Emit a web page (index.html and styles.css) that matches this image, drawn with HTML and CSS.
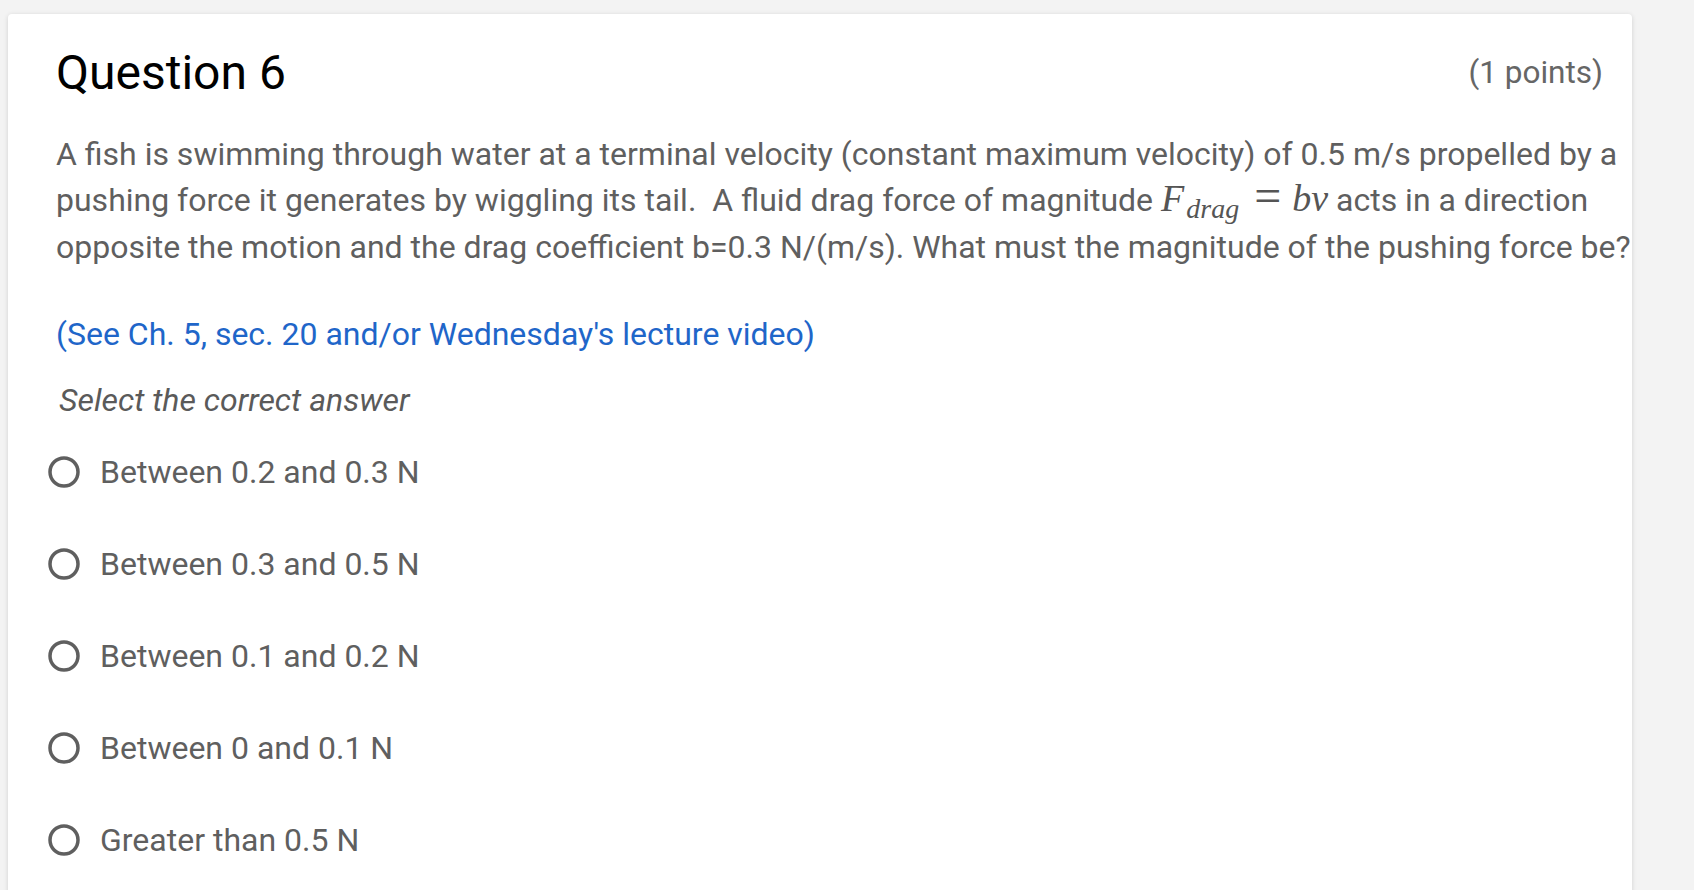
FILE: index.html
```html
<!DOCTYPE html>
<html lang="en">
<head>
<meta charset="utf-8">
<title>Question 6</title>
<link rel="stylesheet" href="styles.css">
</head>
<body>
  <main class="card">
    <header class="q-header">
      <h1 class="q-title">Question 6</h1>
      <span class="q-points">(1 points)</span>
    </header>

    <p class="q-text">A fish is swimming through water at a terminal velocity (constant maximum velocity) of 0.5 m/s propelled by a<br>pushing force it generates by wiggling its tail.&nbsp; A fluid drag force of magnitude <span class="math"><span class="mi">F</span><span class="msub">drag</span><span class="mo">=</span><span class="mi">bv</span></span> acts in a direction<br>opposite the motion and the drag coefficient b=0.3 N/(m/s). What must the magnitude of the pushing force be?</p>

    <p class="q-link">(See Ch. 5, sec. 20 and/or Wednesday's lecture video)</p>

    <p class="q-hint">Select the correct answer</p>

    <ul class="options">
      <li class="option">
        <svg class="radio" viewBox="0 0 32 32" width="32" height="32"><circle cx="16" cy="16" r="14" /></svg>
        <span class="option-label">Between 0.2 and 0.3 N</span>
      </li>
      <li class="option">
        <svg class="radio" viewBox="0 0 32 32" width="32" height="32"><circle cx="16" cy="16" r="14" /></svg>
        <span class="option-label">Between 0.3 and 0.5 N</span>
      </li>
      <li class="option">
        <svg class="radio" viewBox="0 0 32 32" width="32" height="32"><circle cx="16" cy="16" r="14" /></svg>
        <span class="option-label">Between 0.1 and 0.2 N</span>
      </li>
      <li class="option">
        <svg class="radio" viewBox="0 0 32 32" width="32" height="32"><circle cx="16" cy="16" r="14" /></svg>
        <span class="option-label">Between 0 and 0.1 N</span>
      </li>
      <li class="option">
        <svg class="radio" viewBox="0 0 32 32" width="32" height="32"><circle cx="16" cy="16" r="14" /></svg>
        <span class="option-label">Greater than 0.5 N</span>
      </li>
    </ul>
  </main>
</body>
</html>
```

FILE: styles.css
```css
html, body {
  margin: 0;
  padding: 0;
}

body {
  background: #f3f3f3;
  padding: 14px 0 0 8px;
  font-family: Roboto, "Noto Sans", "Liberation Sans", sans-serif;
  overflow: hidden;
}

.card {
  width: 1624px;
  box-sizing: border-box;
  background: #ffffff;
  border-radius: 4px;
  box-shadow: 0 1px 5px rgba(0, 0, 0, 0.14);
  padding: 30px 29px 40px 48px;
}

.q-header {
  display: flex;
  justify-content: space-between;
  align-items: center;
}

.q-title {
  margin: 0;
  font-size: 48px;
  font-weight: 400;
  line-height: normal;
  color: #000000;
}

.q-points {
  font-size: 31.5px;
  color: #666666;
}

.q-text {
  margin: 30px 0 0 0;
  font-size: 32px;
  line-height: 46.4px;
  color: #5f5f5f;
  white-space: nowrap;
}

.math {
  font-family: "Liberation Serif", "DejaVu Serif", serif;
  font-size: 38px;
  line-height: 0;
  color: #555555;
}

.mi {
  font-style: italic;
}

.msub {
  font-style: italic;
  font-size: 28px;
  position: relative;
  top: 7px;
  margin-left: 2px;
}

.mo {
  display: inline-block;
  font-size: 48px;
  font-weight: 300;
  margin: 0 11px 0 15px;
  transform: translateY(1px);
}

.q-link {
  margin: 41px 0 0 0;
  font-size: 32px;
  line-height: 46.4px;
  color: #1f66c9;
}

.q-hint {
  margin: 23px 0 0 0;
  padding-left: 3px;
  font-size: 32px;
  font-style: italic;
  line-height: normal;
  color: #5a5a5a;
}

.options {
  list-style: none;
  margin: 7px 0 0 -8px;
  padding: 0;
}

.option {
  display: flex;
  align-items: center;
  gap: 20px;
  height: 92px;
}

.radio {
  flex: none;
  fill: none;
  stroke: #5f5f5f;
  stroke-width: 3.5;
}

.option-label {
  font-size: 32px;
  color: #5f5f5f;
}
```
